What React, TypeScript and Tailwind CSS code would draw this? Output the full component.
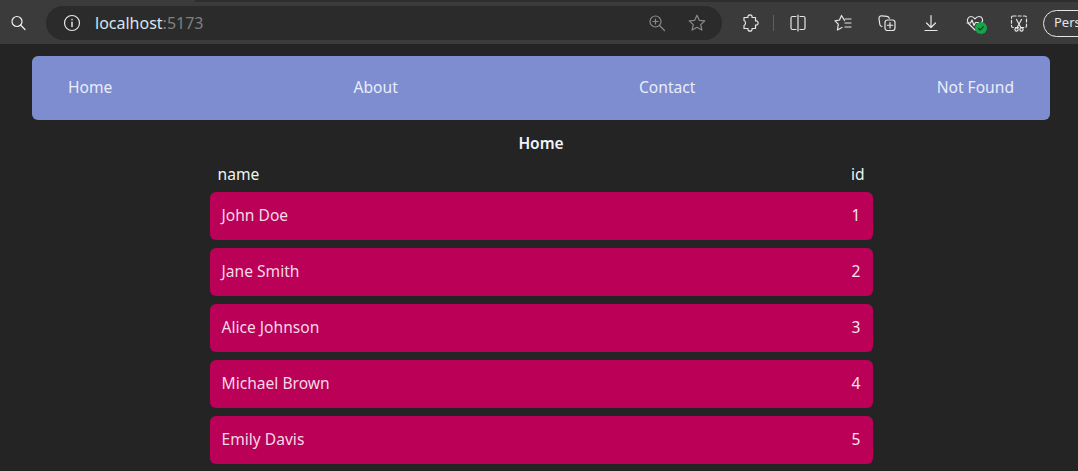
const users = [
  { id: 1, name: 'John Doe' },
  { id: 2, name: 'Jane Smith' },
  { id: 3, name: 'Alice Johnson' },
  { id: 4, name: 'Michael Brown' },
  { id: 5, name: 'Emily Davis' },
];

const links = ['Home', 'About', 'Contact', 'Not Found'];

function Icon({ children }: { children: React.ReactNode }) {
  return (
    <div className="flex h-[42px] w-[44px] shrink-0 items-center justify-center">
      <svg width="20" height="20" viewBox="0 0 20 20" fill="none" stroke="#e6e6e6" strokeWidth="1.2" strokeLinecap="round" strokeLinejoin="round">
        {children}
      </svg>
    </div>
  );
}

function BrowserBar() {
  return (
    <div className="h-[44px] overflow-hidden bg-[#3b3b3b] font-['Noto_Sans',sans-serif]">
      <div className="ml-[195px] h-[2px] bg-[#2e2e2e]" />
      <div className="flex h-[42px] items-center">
        <div className="flex h-[36px] w-[36px] shrink-0 items-center justify-center">
          <svg width="18" height="18" viewBox="0 0 18 18" fill="none" stroke="#f0f0f0" strokeWidth="1.2" strokeLinecap="round">
            <circle cx="8" cy="7.5" r="5" />
            <path d="M11.5 11l4.500 4.500" />
          </svg>
        </div>
        <div className="ml-[10px] flex h-[34px] w-[676px] shrink-0 items-center rounded-full bg-[#2b2b2b] pl-[17px] pr-[15px]">
          <svg width="18" height="18" viewBox="0 0 18 18" fill="none" stroke="#e6e6e6" strokeWidth="1.2" strokeLinecap="round">
            <circle cx="9" cy="9" r="7.5" />
            <path d="M9 8.200v4.200M9 5.400v.4" strokeWidth="1.500" />
          </svg>
          <div className="ml-[14px] text-[16px] text-[#d8e4ef]">
            localhost<span className="text-[#808080]">:5173</span>
          </div>
          <svg className="ml-auto" width="18" height="18" viewBox="0 0 18 18" fill="none" stroke="#8a8a8a" strokeWidth="1.2" strokeLinecap="round">
            <circle cx="7.500" cy="7.500" r="5.500" />
            <path d="M11.500 11.500l5 5M5 7.500h5M7.500 5v5" />
          </svg>
          <svg className="ml-[21px]" width="20" height="20" viewBox="0 0 20 20" fill="none" stroke="#8a8a8a" strokeWidth="1.2" strokeLinejoin="round">
            <path d="M10 2.200l2.300 5.100 5.500.6-4.100 3.700 1.200 5.500-4.900-2.800-4.900 2.800 1.200-5.500-4.100-3.700 5.500-.6z" />
          </svg>
        </div>
        <div className="ml-[6px]">
          <Icon>
            <path d="M4 4.500H8c-1-3.500 5-3.500 4 0h3.500V8c3.500-1 3.500 5 0 4v3.500H12c1 3.500-5 3.500-4 0H4V12.500c1-.2 1.500-1 1.500-2.500S5 7.700 4 7.500z" />
          </Icon>
        </div>
        <div className="ml-[1px] h-[16px] w-px shrink-0 bg-[#5e5e5e]" />
        <div className="ml-[2px]">
          <Icon>
            <path d="M8 3.500H4.500a1.500 1.500 0 0 0-1.500 1.500v10a1.500 1.500 0 0 0 1.500 1.500H8M12 3.500h3.500a1.500 1.500 0 0 1 1.500 1.500v10a1.500 1.500 0 0 1-1.500 1.500H12M10 2v16" />
          </Icon>
        </div>
        <div className="ml-[1px]">
          <Icon>
            <path d="M11.500 7.500L8.500 2.500 6.500 7 2 7.800l3.300 3.400-.9 5.800 4.600-2.500" />
            <path d="M12 6h6M12 10h6M12 14h6" />
          </Icon>
        </div>
        <Icon>
          <path d="M5 13.500c-1.200-.2-2-.9-2.200-2L2 5.500C1.800 3.800 3.100 2.600 4.800 2.800l5.200.6c1.200.2 2 .8 2.300 2" />
          <rect x="8" y="7" width="10" height="10.500" rx="2.500" />
          <path d="M13 9.500v5.500M10.300 12.250h5.400" />
        </Icon>
        <Icon>
          <path d="M10 2.500v12M5.500 10l4.500 4.500 4.500-4.500M4 17.500h12" />
        </Icon>
        <div className="relative">
          <Icon>
            <path d="M10 17L3.500 10.500C1 7.500 3 3.500 6 3.500c1.800 0 3 1 4 2.300 1-1.300 2.200-2.300 4-2.300 3 0 5 3.500 2.500 6.500" />
            <path d="M2 10h3.500l1.500-3 2 5.500 1.500-3h3" />
          </Icon>
          <div className="absolute left-[22px] top-[20px] flex h-[12px] w-[12px] items-center justify-center rounded-full bg-[#16a34a]">
            <svg width="8" height="8" viewBox="0 0 9 9" fill="none" stroke="#0b3d1c" strokeWidth="1.300">
              <path d="M1.500 4.800l2 1.800 4-4" />
            </svg>
          </div>
        </div>
        <Icon>
          <rect x="2.500" y="3" width="15" height="11.500" rx="1.500" strokeDasharray="3 2.200" />
          <path d="M7.500 6.500l4.300 8M12.500 6.500l-4.300 8" />
          <circle cx="7.500" cy="16.500" r="1.600" />
          <circle cx="12.500" cy="16.500" r="1.600" />
        </Icon>
        <div className="ml-[2px] flex h-[27px] w-[70px] shrink-0 items-center rounded-full border border-[#e6e6e6] pl-[10px] text-[13px] text-[#e6e6e6]">
          Pers
        </div>
      </div>
    </div>
  );
}

export default function App() {
  return (
    <div className="h-[471px] w-[1078px] overflow-hidden bg-[#242424] font-['Noto_Sans',sans-serif] text-[15.6px] text-[#ebebeb]">
      <BrowserBar />
      <div className="pl-[32px] pr-[28px] pt-[12px]">
        <nav className="flex h-[64px] items-center justify-between rounded-[6px] bg-[#7e8cd0] px-[36px] pb-[1px]">
          {links.map((link) => (
            <a key={link} className="text-[#e8eefa]">
              {link}
            </a>
          ))}
        </nav>
        <h1 className="mt-[12px] h-[22px] text-center text-[15.5px] leading-[22px] font-semibold text-[#eef4fa]">Home</h1>
        <div className="mx-auto w-[663px]">
          <div className="flex h-[38px] items-center justify-between px-[8px] pt-[4px] text-[#f0f4f0]">
            <span>name</span>
            <span>id</span>
          </div>
          <div className="flex flex-col gap-[8px]">
            {users.map((user) => (
              <div key={user.id} className="flex h-[48px] items-center justify-between rounded-[6px] bg-[#bb0057] px-[12px] pb-[1px] text-[#f3d9e6]">
                <span>{user.name}</span>
                <span className="text-[#f5e6ee]">{user.id}</span>
              </div>
            ))}
          </div>
        </div>
      </div>
    </div>
  );
}
